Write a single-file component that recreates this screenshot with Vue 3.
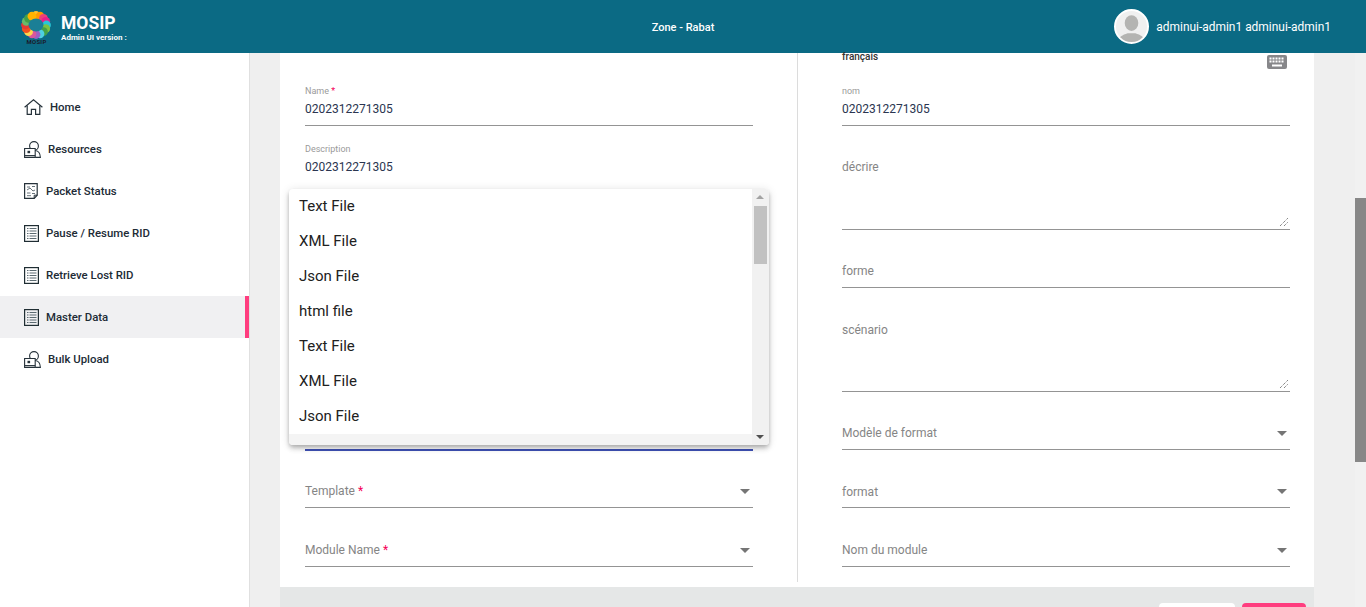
<script setup>
const nav = [
  { label: 'Home', icon: 'home' },
  { label: 'Resources', icon: 'res' },
  { label: 'Packet Status', icon: 'packet' },
  { label: 'Pause / Resume RID', icon: 'list' },
  { label: 'Retrieve Lost RID', icon: 'list' },
  { label: 'Master Data', icon: 'list', active: true },
  { label: 'Bulk Upload', icon: 'res' }
]
const listRows = [3.5, 6, 8.5, 11, 13.5]
const left = [
  { id: 'name', label: 'Name', req: true, value: '0202312271305', float: true },
  { id: 'desc', label: 'Description', value: '0202312271305', float: true, area: true },
  { id: 'form' },
  { id: 'scenario', area: true },
  { id: 'format', select: true, focus: true },
  { id: 'template', label: 'Template', req: true, select: true },
  { id: 'module', label: 'Module Name', req: true, select: true, last: true, low: true }
]
const right = [
  { label: 'nom', value: '0202312271305', float: true },
  { label: 'décrire', area: true, resize: true },
  { label: 'forme' },
  { label: 'scénario', area: true, resize: true, low: true },
  { label: 'Modèle de format', select: true },
  { label: 'format', select: true, low: true },
  { label: 'Nom du module', select: true, last: true, low: true }
]
const options = ['Text File', 'XML File', 'Json File', 'html file', 'Text File', 'XML File', 'Json File', 'html file']
const colors = ['#fbc02d', '#ff9800', '#ec407a', '#e91e8c', '#29c6d8', '#7cc342', '#43a047', '#4dd0e1', '#9c5fc4', '#d9579c', '#ffd54f', '#f4511e', '#e53935', '#66bb6a', '#43a047', '#ffb300']
const dots = colors.map((c, i) => {
  const a = (i / colors.length) * Math.PI * 2 - Math.PI / 2
  return { x: 15 + Math.cos(a) * 10.5, y: 14 + Math.sin(a) * 9.5, c }
})
</script>

<template>
  <div class="app">
    <header class="topbar">
      <div class="brand">
        <svg class="logo" width="31" height="35" viewBox="0 0 31 35">
          <circle v-for="(d, i) in dots" :key="i" :cx="d.x" :cy="d.y" r="4.400" :fill="d.c" />
          <ellipse cx="15" cy="14" rx="7.500" ry="6.500" fill="#1b7f96" />
          <text x="15.500" y="33" text-anchor="middle" class="logo-text">MOSIP</text>
        </svg>
        <div class="brand-text">
          <div class="brand-name">MOSIP</div>
          <div class="brand-ver">Admin UI version :</div>
        </div>
      </div>
      <div class="zone">Zone - Rabat</div>
      <div class="user">
        <svg class="avatar" width="35" height="35" viewBox="0 0 36 36">
          <defs><clipPath id="av"><circle cx="18" cy="18" r="16" /></clipPath></defs>
          <circle cx="18" cy="18" r="17" fill="#f0f0f0" stroke="#fff" stroke-width="2" />
          <g clip-path="url(#av)" fill="#b4b4b2">
            <ellipse cx="18" cy="14.500" rx="7" ry="8" />
            <path d="M4 36c0-7 4-9 10-11h8c6 2 10 4 10 11z" />
          </g>
        </svg>
        <span class="user-name">adminui-admin1 adminui-admin1</span>
      </div>
    </header>

    <div class="body">
      <aside class="sidebar">
        <nav class="menu">
          <div v-for="item in nav" :key="item.label" class="menu-item" :class="{ active: item.active }">
            <svg v-if="item.icon === 'home'" class="ico ico-home" width="19" height="16" viewBox="0 0 19 16" fill="none" stroke="#26323a" stroke-width="1.200">
              <path d="M.6 8.200 9.500.8l8.900 7.400" />
              <path d="M3.200 6.400v9h4.200v-5h4.200v5h4.200v-9" />
            </svg>
            <svg v-else-if="item.icon === 'res'" class="ico ico-res" width="17" height="17" viewBox="0 0 17 17" fill="none" stroke="#26323a" stroke-width="1.100">
              <circle cx="10" cy="5" r="4.400" />
              <path d="M.6 7.500h10.600v8.900H.6z" fill="#fff" />
              <path d="M.6 14.600h10.600" />
              <path d="M11.200 9.500c3 .3 5 2 5.200 6.900h-5.200" />
              <rect x="3.500" y="9.800" width="2.600" height="2.400" fill="#26323a" stroke="none" />
            </svg>
            <svg v-else-if="item.icon === 'packet'" class="ico ico-packet" width="14" height="16" viewBox="0 0 14 16" fill="none" stroke="#26323a" stroke-width="1.200">
              <path d="M.6.6h12.600v11.600l-3 3.200H.6z" />
              <path d="M10.200 15.400v-3.200h3" stroke-width="1" />
              <path d="M3 4h3M8 3.500h3M3 7l3-2 3 3 2-1M3 10h3.500M8 10.500h3M3 12.700h4" stroke-width=".9" stroke="#56636b" />
            </svg>
            <svg v-else class="ico ico-list" width="15" height="17" viewBox="0 0 15 17" fill="none" stroke="#1f2d33" stroke-width="1.200">
              <rect x=".6" y=".6" width="13.800" height="15.800" />
              <path v-for="y in listRows" :key="y" :d="`M3 ${y}h1.500M5.500 ${y}h7`" stroke="#5c6b72" stroke-width="1" />
            </svg>
            <span>{{ item.label }}</span>
          </div>
        </nav>
      </aside>

      <main class="main">
        <section class="card">
          <div class="columns">
            <div class="col col-left">
              <div class="col-head"></div>
              <div v-for="f in left" :key="f.id" class="field" :class="{ area: f.area, sel: f.select, focus: f.focus, last: f.last, low: f.low, floated: f.float }">
                <div v-if="f.float" class="float">{{ f.label }}<i v-if="f.req"> *</i></div>
                <div v-if="f.float" class="value">{{ f.value }}</div>
                <div v-else-if="f.label" class="holder holder-left">{{ f.label }}<i v-if="f.req"> *</i></div>
                <span v-if="f.select" class="arrow"></span>
              </div>

              <div class="dropdown">
                <div class="option" v-for="(o, i) in options" :key="i" :class="{ hover: i === 7 }">{{ o }}</div>
                <div class="dd-track">
                  <span class="dd-up"></span>
                  <span class="dd-thumb"></span>
                  <span class="dd-down"></span>
                </div>
              </div>
            </div>
            <div class="col col-right">
              <div class="col-head">
                <span class="lang">français</span>
                <svg class="kbd" width="20" height="14" viewBox="0 0 20 14">
                  <rect width="20" height="14" rx="2" fill="#87878a" />
                  <g fill="#fff">
                    <rect v-for="x in [2.500,5.500,8.500,11.500,14.500]" :key="'a'+x" :x="x" y="2.500" width="2" height="2" />
                    <rect v-for="x in [2.500,5.500,8.500,11.500,14.500]" :key="'b'+x" :x="x" y="5.500" width="2" height="2" />
                    <rect x="5" y="9.500" width="10" height="2" />
                  </g>
                </svg>
              </div>
              <div v-for="f in right" :key="f.label" class="field" :class="{ area: f.area, sel: f.select, last: f.last, low: f.low, floated: f.float }">
                <div v-if="f.float" class="float">{{ f.label }}</div>
                <div v-if="f.float" class="value">{{ f.value }}</div>
                <div v-else class="holder">{{ f.label }}</div>
                <span v-if="f.select" class="arrow"></span>
                <svg v-if="f.resize" class="grip" width="10" height="10" viewBox="0 0 10 10" stroke="#555" stroke-width="1" stroke-dasharray="1 1">
                  <path d="M1 9 9 1M5 9l4-4" />
                </svg>
              </div>
            </div>
          </div>
          <div class="gap"></div>
          <footer class="actions">
            <span class="btn btn-cancel"></span>
            <span class="btn btn-save"></span>
          </footer>
        </section>
        <div class="page-track"><div class="page-thumb"></div></div>
      </main>
    </div>
  </div>
</template>

<style>
html, body { margin: 0; overflow: hidden; }
</style>

<style scoped>
.app {
  height: 607px;
  overflow: hidden;
  display: flex;
  flex-direction: column;
  font-family: Roboto, "Liberation Sans", sans-serif;
  color: #212529;
}
.topbar {
  height: 53px;
  flex: none;
  background: #0b6a84;
  color: #fff;
  display: grid;
  grid-template-columns: 1fr auto 1fr;
  align-items: center;
  padding: 0 35px;
}
.brand { display: flex; align-items: center; gap: 9px; margin-left: -14px; }
.logo { display: block; margin-top: 3px; }
.logo-text { font: 700 6px Roboto, sans-serif; fill: #1b1b2a; letter-spacing: .3px; }
.brand-text { margin-top: 2px; }
.brand-name { font-size: 17.500px; font-weight: 700; line-height: 18px; }
.brand-ver { font-size: 8px; font-weight: 700; line-height: 9px; margin-top: 1px; }
.zone { font-size: 11px; font-weight: 500; margin-top: 2px; }
.user { display: flex; align-items: center; gap: 7px; justify-self: end; }
.avatar { display: block; }
.user-name { font-size: 11.950px; }

.body { flex: 1; display: flex; min-height: 0; }
.sidebar {
  width: 249px;
  flex: none;
  background: #fff;
  border-right: 1px solid #e0e0e0;
}
.menu { padding-top: 33px; }
.menu-item {
  height: 42px;
  display: flex;
  align-items: center;
  padding-left: 24px;
  font-size: 11.400px;
  font-weight: 500;
  color: #212b36;
  box-sizing: border-box;
}
.menu-item.active { background: #f0f0f2; border-right: 4px solid #ff3d7f; }
.ico { display: block; flex: none; }
.ico-home { margin-right: 7px; }
.ico-res { margin-right: 7px; }
.ico-packet { margin-right: 8px; }
.ico-list { margin-right: 7px; }

.main {
  flex: 1;
  min-width: 0;
  background: #efefef;
  padding-left: 30px;
  position: relative;
}
.card { width: 1034px; background: #fff; height: 100%; display: flex; flex-direction: column; }
.columns { display: flex; height: 529px; flex: none; }
.col { box-sizing: border-box; position: relative; }
.col-left { width: 518px; padding: 0 44px 0 25px; border-right: 1px solid #dcdcdc; }
.col-right { width: 516px; padding: 0 24px 0 44px; }
.col-head {
  height: 15px;
  display: flex;
  justify-content: space-between;
  padding-right: 3px;
}
.lang { font-size: 10px; font-weight: 500; line-height: 8px; color: #333; }
.kbd { display: block; margin-top: 2px; }

.field {
  height: 58px;
  box-sizing: border-box;
  padding-top: 16px;
  border-bottom: 1px solid #949494;
  position: relative;
}
.field.floated { padding-top: 17px; }
.field.area { height: 104px; }
.field.last { height: 59px; }
.float { font-size: 9px; line-height: 12px; color: #9a9a9a; }
.float i, .holder i { font-style: normal; color: #f50057; }
.value { font-size: 12px; line-height: 14px; margin-top: 5px; color: #2a3550; }
.holder { font-size: 12px; line-height: 14px; margin-top: 18px; color: #858585; }
.field.low .holder { margin-top: 19px; }
.arrow {
  position: absolute;
  right: 3px;
  bottom: 13px;
  width: 0;
  height: 0;
  border-left: 5.500px solid transparent;
  border-right: 5.500px solid transparent;
  border-top: 5.500px solid #757575;
}
.field.focus { border-bottom-color: #3f51b5; box-shadow: 0 1px 0 #3f51b5; }
.grip { position: absolute; right: 1px; bottom: 2px; }

.dropdown {
  position: absolute;
  left: 9px;
  top: 136px;
  width: 480px;
  height: 256px;
  background: #fff;
  overflow: hidden;
  border-radius: 4px;
  box-shadow: 0 2px 4px -1px rgba(0, 0, 0, .2), 0 4px 5px rgba(0, 0, 0, .14), 0 1px 10px rgba(0, 0, 0, .12);
}
.option {
  height: 35px;
  line-height: 34px;
  padding-left: 10px;
  font-size: 15px;
  color: #212121;
}
.option.hover { background: #f4f4f4; }
.dd-track {
  position: absolute;
  top: 0;
  right: 0;
  bottom: 0;
  width: 17px;
  background: #f1f1f1;
}
.dd-up, .dd-down {
  position: absolute;
  left: 4px;
  width: 0;
  height: 0;
  border-left: 4px solid transparent;
  border-right: 4px solid transparent;
}
.dd-up { top: 6px; border-bottom: 4px solid #a3a3a3; }
.dd-down { bottom: 6px; border-top: 4px solid #505050; }
.dd-thumb { position: absolute; top: 17px; left: 2px; width: 13px; height: 58px; background: #c1c1c1; }

.gap { height: 5px; flex: none; }
.actions {
  flex: 1;
  background: #e5e7e7;
  display: flex;
  justify-content: flex-end;
  gap: 7px;
  padding: 16px 8px 0 0;
}
.btn {
  display: block;
  height: 36px;
  border-radius: 4px;
  flex: none;
}
.btn-cancel { width: 76px; background: #fff; }
.btn-save { width: 64px; background: #ff3d7f; }
.page-track {
  position: absolute;
  top: 0;
  right: 0;
  bottom: 0;
  width: 11px;
  background: #f1f1f1;
}
.page-thumb { margin-top: 145px; height: 264px; background: #878787; }
</style>
